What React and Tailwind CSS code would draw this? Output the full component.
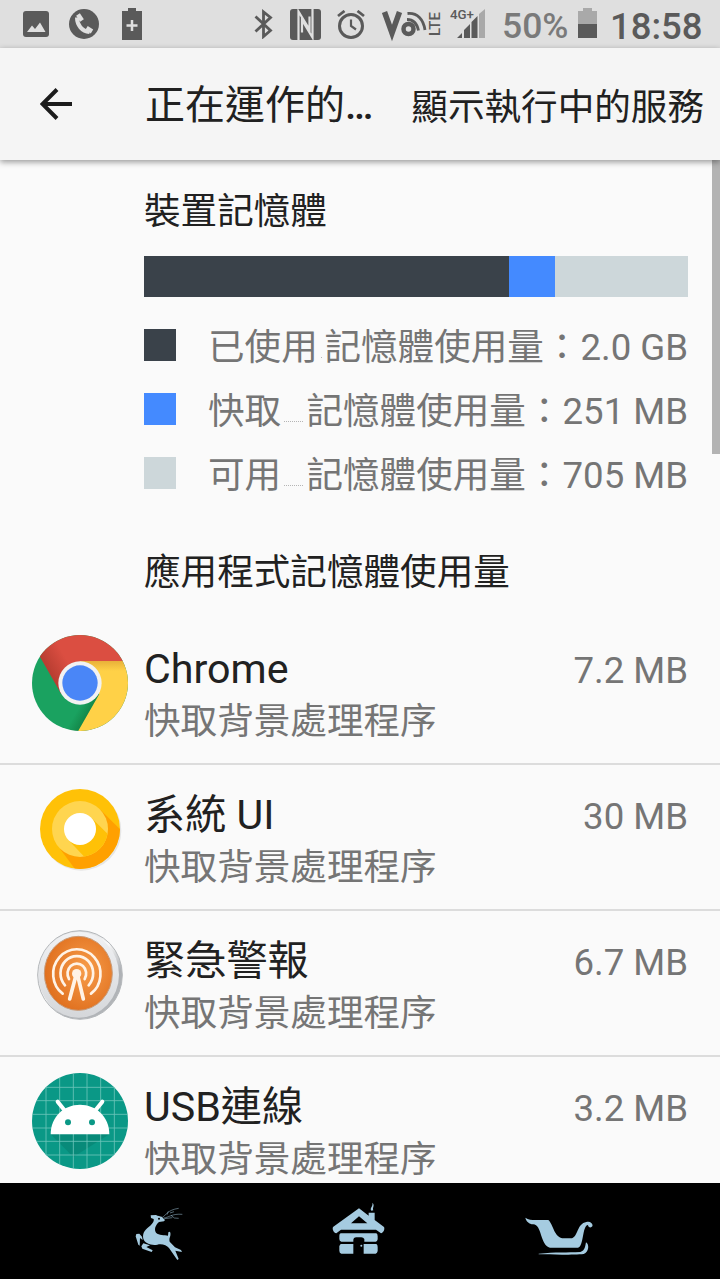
import React from 'react';

const legend = [
  { label: '已使用', value: '2.0 GB', color: 'bg-[#3a424a]' },
  { label: '快取', value: '251 MB', color: 'bg-[#448aff]' },
  { label: '可用', value: '705 MB', color: 'bg-[#cdd7da]' },
];

const apps = [
  { name: 'Chrome', size: '7.2 MB', Icon: ChromeIcon },
  { name: '系統 UI', size: '30 MB', Icon: SystemIcon },
  { name: '緊急警報', size: '6.7 MB', Icon: AlertIcon },
  { name: 'USB連線', size: '3.2 MB', Icon: AndroidIcon },
];

function StatusBar() {
  return (
    <div className="flex h-12 shrink-0 items-center bg-[#dfdfdf] text-[#5a5a5a]">
      <svg className="ml-[23px] h-[26px] w-[26px]" viewBox="0 0 26 26" fill="currentColor">
        <rect width="26" height="26" rx="3" />
        <path d="M4 21l5-6.500 3 3.500 5-6.500 5.500 9.500z" fill="#dfdfdf" />
      </svg>
      <svg className="ml-5 h-[30px] w-[30px]" viewBox="0 0 30 30" fill="currentColor">
        <circle cx="15" cy="15" r="15" />
        <path d="M8 8.500C8 16 13 22.500 20.500 23" fill="none" stroke="#dfdfdf" strokeWidth="4" />
        <path d="M9 5.500l4 6M17.500 19l5.500 3.500" stroke="#dfdfdf" strokeWidth="4.500" />
      </svg>
      <svg className="ml-[23px] h-8 w-5" viewBox="0 0 20 32" fill="currentColor">
        <path d="M0 3h6V0h8v3h6v29H0z" />
        <path d="M10 12v11M4.500 17.500h11" stroke="#dfdfdf" strokeWidth="2.500" />
      </svg>
      <svg className="ml-[112px] h-[30px] w-5" viewBox="0 0 20 30" fill="none" stroke="currentColor" strokeWidth="2.800">
        <path d="M1.500 7.500L16.500 21.500L9.500 27.500V3L16.500 8.500L1.500 22.500" />
      </svg>
      <svg className="ml-4 h-[31px] w-[31px]" viewBox="0 0 31 31">
        <rect width="31" height="31" rx="3" fill="currentColor" />
        <path d="M8.500 31V2.500L19.500 20.500V7.500M22.500 0V28.500L12 11V23.500" fill="none" stroke="#dfdfdf" strokeWidth="2.200" />
      </svg>
      <svg className="ml-4 h-[29px] w-7" viewBox="0 0 28 29" fill="none" stroke="currentColor">
        <circle cx="14" cy="16" r="11.500" strokeWidth="3" />
        <path d="M14 9.500V16l5 3.500" strokeWidth="2.200" />
        <path d="M1 6l6.500-5M27 6l-6.500-5" strokeWidth="2.800" />
      </svg>
      <svg className="ml-4 h-9 w-[60px]" viewBox="0 0 60 36" fill="none" stroke="currentColor">
        <path d="M3.500 6L11 27L18.500 6" strokeWidth="5.500" />
        <circle cx="27.500" cy="23" r="5" strokeWidth="4.500" />
        <path d="M26 13.500c6 0 10 4 11.500 11M26.500 7.500c10-1 16 6 17.500 16.500" strokeWidth="2.800" />
        <text
          transform="translate(58.500 30) rotate(-90)"
          className="font-['Roboto',sans-serif] text-[14px] font-medium"
          fill="currentColor"
          stroke="none"
          textLength="24"
          lengthAdjust="spacingAndGlyphs"
        >
          LTE
        </text>
      </svg>
      <svg className="ml-[9px] h-9 w-[35px]" viewBox="0 0 35 36" fill="currentColor">
        <text x="0" y="12.500" className="font-['Roboto',sans-serif] text-[13.500px] font-medium" textLength="24" lengthAdjust="spacingAndGlyphs">
          4G+
        </text>
        <path d="M7 32l5-5v5zM14 32v-8l6-6v14zM21.500 32V16l6-6v22z" />
        <path d="M29 32V8l6-5v29z" fill="#a9a9a9" />
      </svg>
      <span className="ml-[17px] mt-[6px] w-[75px] whitespace-nowrap text-[35.500px] font-medium leading-none text-[#7a7a7a]">50%</span>
      <svg className="mb-0.5 ml-px h-[30px] w-[19px]" viewBox="0 0 19 30">
        <path d="M0 3h5V0h9v3h5v13H0z" fill="#a9a9a9" />
        <path d="M0 16h19v14H0z" fill="currentColor" />
      </svg>
      <span className="ml-[13px] mt-[6px] whitespace-nowrap text-[36.500px] font-medium leading-none">18:58</span>
    </div>
  );
}

function ChromeIcon() {
  return (
    <svg className="size-24" viewBox="36 44 288 288">
      <defs>
        <linearGradient id="redShade" x1="90" y1="170" x2="150" y2="135" gradientUnits="userSpaceOnUse">
          <stop offset="0" stopColor="#b53c30" />
          <stop offset="1" stopColor="#db4e41" />
        </linearGradient>
        <linearGradient id="yellowShade" x1="0" y1="122" x2="0" y2="152" gradientUnits="userSpaceOnUse">
          <stop offset="0" stopColor="#e8b03a" />
          <stop offset="1" stopColor="#ffd147" />
        </linearGradient>
        <linearGradient id="greenShade" x1="210" y1="275" x2="180" y2="257" gradientUnits="userSpaceOnUse">
          <stop offset="0" stopColor="#138749" />
          <stop offset="1" stopColor="#1aa260" />
        </linearGradient>
        <clipPath id="chromeDisc">
          <circle cx="180" cy="188" r="144" />
        </clipPath>
      </defs>
      <g clipPath="url(#chromeDisc)">
        <path d="M30 40h300v300H30z" fill="url(#greenShade)" />
        <path d="M180 188L124 222L50 92V30H330V122H180Z" fill="url(#redShade)" />
        <path d="M180 122H330V340H170L238 221L180 188Z" fill="url(#yellowShade)" />
      </g>
      <circle cx="180" cy="188" r="65" fill="#f2f2f2" />
      <circle cx="180" cy="188" r="53" fill="#4a86f7" />
    </svg>
  );
}

function SystemIcon() {
  return (
    <svg className="size-24" viewBox="36 482 288 288">
      <clipPath id="outer">
        <circle cx="180" cy="626" r="120" />
      </clipPath>
      <clipPath id="middle">
        <circle cx="180" cy="626" r="84" />
      </clipPath>
      <circle cx="184" cy="631" r="120" fill="#e6e6e6" />
      <circle cx="180" cy="626" r="120" fill="#ffc107" />
      <path d="M239 566L330 657V780H190L120 685Z" fill="#ffa000" clipPath="url(#outer)" />
      <circle cx="180" cy="626" r="84" fill="#ffd54f" />
      <path d="M214 592L290 668V740H222L146 660Z" fill="#ffc107" clipPath="url(#middle)" />
      <circle cx="180" cy="626" r="48" fill="#fff" />
    </svg>
  );
}

function AlertIcon() {
  return (
    <svg className="size-24" viewBox="36 51 288 288">
      <defs>
        <linearGradient id="silver" x1="0.100" y1="0" x2="0.900" y2="1">
          <stop offset="0" stopColor="#b9bcc0" />
          <stop offset="0.450" stopColor="#fafafa" />
          <stop offset="0.700" stopColor="#aeb1b5" />
          <stop offset="1" stopColor="#b4b7ba" />
        </linearGradient>
        <linearGradient id="rim" x1="0" y1="0" x2="0" y2="1">
          <stop offset="0" stopColor="#f1f2f4" />
          <stop offset="1" stopColor="#d5d7da" />
        </linearGradient>
        <radialGradient id="orange" cx="0.600" cy="0.450" r="0.600">
          <stop offset="0" stopColor="#f79d4a" />
          <stop offset="1" stopColor="#e0701f" />
        </radialGradient>
      </defs>
      <ellipse cx="180" cy="195" rx="127" ry="133" fill="url(#silver)" stroke="#b4b7ba" strokeWidth="3" />
      <ellipse cx="176" cy="194" rx="121" ry="129" fill="url(#rim)" />
      <ellipse cx="175" cy="190" rx="102" ry="111" fill="url(#orange)" stroke="#c79a78" strokeWidth="3" />
      <g fill="none" stroke="#fff3e6" strokeLinecap="round" strokeWidth="8">
        <path d="M128 251A71 74 0 1 1 213 251" />
        <path d="M135 226A49 52 0 1 1 206 226" />
        <path d="M147 207A28 30 0 1 1 194 207" />
      </g>
      <circle cx="170" cy="191" r="14" fill="#fff3e6" />
      <path d="M168 196L149 267M173 196L190 267" stroke="#fff3e6" strokeWidth="11" strokeLinecap="round" />
    </svg>
  );
}

function AndroidIcon() {
  return (
    <svg className="size-24" viewBox="36 487 288 288">
      <clipPath id="disc">
        <circle cx="180" cy="631" r="144" />
      </clipPath>
      <g clipPath="url(#disc)">
        <path d="M30 480h300v300H30z" fill="#0a9886" />
        <path d="M92 671L160 739L268 671Z" fill="#088a79" />
        <path
          d="M78 480v300M119 480v300M160 480v300M201 480v300M242 480v300M283 480v300M30 530h300M30 570h300M30 611h300M30 652h300M30 692h300M30 733h300"
          stroke="#6cc4b9"
          strokeWidth="2.500"
        />
      </g>
      <path d="M92 671C92 618 132 582 180 582C228 582 268 618 268 671Z" fill="#fff" />
      <path d="M113 573L136 602M247 573L224 602" stroke="#fff" strokeWidth="12" strokeLinecap="round" />
      <circle cx="144" cy="635" r="9" fill="#0a9886" />
      <circle cx="216" cy="635" r="9" fill="#0a9886" />
    </svg>
  );
}

function NavBar() {
  return (
    <div className="flex h-24 shrink-0 items-start bg-black px-[59px] text-[#a5cbe0]">
      <div className="flex w-[200px] justify-center pt-[22px]">
        <svg className="h-[57px] w-[52px]" viewBox="70 45 156 171" fill="currentColor">
          <path d="M123 76L139 75C145 78 151 79 156 80L166 90L163 94L148 96C136 106 133 120 139 128C148 137 164 134 175 137L176 127C180 122 184 127 182 137C180 143 178 147 180 155L196 172L214 180L217 186L197 182L207 207L203 210L178 174C171 166 158 161 143 164C124 167 106 160 101 146C98 132 104 121 116 112C127 103 134 95 132 87L124 84Z" />
          <path d="M97 140L89 131L80 132L78 139L86 164L90 167L91 144L99 150ZM101 160L95 169L98 176L126 186L129 181L110 171L121 166Z" />
          <path d="M158 82C170 75 173 60 207 55M162 84C176 83 188 70 218 73M172 74L176 64M181 69L193 65M184 76L194 84L207 85M164 86L188 83" fill="none" stroke="currentColor" strokeWidth="1.500" />
          <circle cx="148" cy="86" r="3" fill="#000" />
        </svg>
      </div>
      <div className="flex w-[200px] justify-center pt-[18px]">
        <svg className="h-[54px] w-[54px]" viewBox="667 34 162 162" fill="currentColor">
          <path d="M748 56L777 78V69H795V91L823 112C826 118 822 129 814 131L799 120H694L680 131C672 129 667 119 670 112ZM748 80L724 101H773Z" fillRule="evenodd" />
          <path d="M693 131H800Q804 132 804 140V149Q803 156 798 156H764V148Q761 143 755 143H740Q731 144 731 151V156H695Q689 155 689 148V138Q689 132 693 131ZM693 163H731V192H695Q689 190 689 183V169ZM762 163H800Q804 165 804 172V184Q803 191 798 192H762Z" />
          <path d="M785 63C779 55 791 50 788 39C797 47 787 53 791 62Z" />
          <circle cx="755" cy="168" r="3" />
        </svg>
      </div>
      <div className="flex w-[200px] justify-center pt-[34px]">
        <svg className="h-[39px] w-[68px]" viewBox="73 82 204 117" fill="currentColor">
          <path d="M74 84C83 91 93 91 105 91H143C158 103 160 146 190 146H214C232 140 229 102 257 97C269 93 278 103 275 110C271 116 262 113 262 106C244 108 250 171 232 174H148C118 168 124 103 97 104C86 103 76 95 74 84Z" />
          <path d="M114 192C165 187 200 189 239 187C253 184 254 168 256 158C266 163 266 187 249 193C220 196 150 195 114 194Z" />
        </svg>
      </div>
    </div>
  );
}

export default function App() {
  return (
    <div className="flex h-[1279px] w-[720px] flex-col overflow-hidden bg-[#fafafa] font-['Roboto','Noto_Sans_CJK_TC',sans-serif] text-[#212121]">
      <StatusBar />
      <header className="z-10 flex h-28 shrink-0 items-center bg-[#f5f5f5] pr-4 shadow-[0_2px_6px_rgba(0,0,0,0.4)]">
        <svg className="ml-10 h-8 w-8" viewBox="0 0 32 32" fill="none" stroke="#1c1c1c" strokeWidth="4">
          <path d="M32 16H3M17 1.500L2.500 16L17 30.500" />
        </svg>
        <h1 className="ml-[73px] flex-1 whitespace-nowrap pt-1 text-[40px] leading-[52px]">
          正在運作的<span className="font-medium">…</span>
        </h1>
        <button className="whitespace-nowrap pt-[7px] text-[36.600px] leading-[52px]">顯示執行中的服務</button>
      </header>

      <main className="relative flex-1 overflow-hidden">
        <section className="pl-36 pr-8 pt-[30px] text-[36.600px]">
          <h2 className="leading-[44px]">裝置記憶體</h2>
          <div className="mt-[22px] flex h-[41px] bg-[#cdd7da]">
            <div className="w-[365px] bg-[#3a424a]" />
            <div className="w-[46px] bg-[#448aff]" />
          </div>
          <ul className="mt-8 flex flex-col gap-8">
            {legend.map((item) => (
              <li key={item.label} className="flex h-8 items-center text-[#757575]">
                <span className={`size-8 shrink-0 ${item.color}`} />
                <span className="ml-8 mt-1.5 whitespace-nowrap leading-8">{item.label}</span>
                <span className="mx-[3px] mt-6 flex-1 border-b border-dotted border-[#b5b5b5]" />
                <span className="mt-1.5 whitespace-nowrap leading-8">記憶體使用量：{item.value}</span>
              </li>
            ))}
          </ul>
          <h2 className="mt-[62px] leading-[44px]">應用程式記憶體使用量</h2>
        </section>

        <ul className="mt-6">
          {apps.map(({ name, size, Icon }) => (
            <li key={name} className="flex h-[146px] border-b-2 border-[#dcdcdc] pl-8 pr-8">
              <div className="pt-4">
                <Icon />
              </div>
              <div className="ml-4 flex-1 pt-6">
                <div className="text-[41.200px] leading-[52px]">{name}</div>
                <div className="mt-px text-[36.600px] leading-[52px] text-[#757575]">快取背景處理程序</div>
              </div>
              <div className="pt-[26px] text-[36.600px] leading-[52px] text-[#757575]">{size}</div>
            </li>
          ))}
        </ul>
        <div className="absolute right-0 top-0 h-[294px] w-2 bg-[#b3b3b3]" />
      </main>
      <NavBar />
    </div>
  );
}
